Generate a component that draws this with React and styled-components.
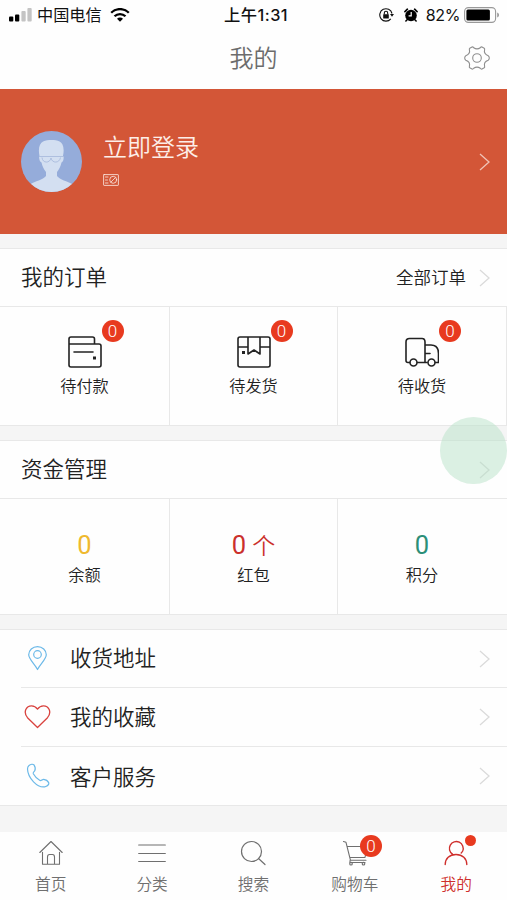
import React from 'react';
import styled, { css, createGlobalStyle } from 'styled-components';

const colorHero = '#d35637';
const colorBadge = '#e83a1f';
const colorActive = '#cf2f2c';
const colorLine = '#e8e8e8';

const GlobalStyle = createGlobalStyle`
  * { box-sizing: border-box; }
  body {
    margin: 0;
    background: #f5f5f5;
    font-family: "Liberation Sans", "Noto Sans CJK SC", sans-serif;
    font-weight: 350;
    color: #222;
  }
  svg { display: block; flex: none; }
`;

const cssRow = css`
  display: flex;
  align-items: center;
`;
const cssPanel = css`
  background: #fefefe;
  border-top: 1px solid ${colorLine};
  border-bottom: 1px solid ${colorLine};
`;
const cssDigits = css`
  font-family: Roboto, "Noto Sans CJK SC", sans-serif;
`;

const Page = styled.div`
  position: relative;
  display: flex;
  flex-direction: column;
  width: 507px;
  height: 900px;
  overflow: hidden;
  white-space: nowrap;
`;

const StatusBar = styled.div`
  display: grid;
  grid-template-columns: 1fr auto 1fr;
  align-items: center;
  height: 30px;
  padding: 0 7px 0 9px;
  background: #fefefe;
  color: #111;
  font-family: Inter, "Noto Sans CJK SC", sans-serif;
  font-weight: 400;
  line-height: 30px;
`;
const StatusLeft = styled.div`
  ${cssRow}
`;
const Carrier = styled.span`
  margin: 0 8px 0 5px;
  font-size: 16.2px;
`;
const StatusTime = styled.div`
  padding-left: 3px;
  font-size: 16.3px;
  font-weight: 500;
  letter-spacing: 0.5px;
`;
const StatusRight = styled.div`
  ${cssRow}
  justify-content: flex-end;
`;
const Percent = styled.span`
  margin: 0 4px 0 8px;
  font-size: 16px;
  letter-spacing: -0.4px;
`;
const StatusGlyph = styled.span`
  margin-right: 10px;
`;

const TitleBar = styled.header`
  ${cssRow}
  justify-content: space-between;
  height: 59px;
  padding: 0 17px 2px;
  background: #fefefe;

  > svg {
    margin-bottom: 2px;
  }
`;
const TitleSide = styled.div`
  width: 26px;
`;
const Title = styled.h1`
  margin: 0;
  font-size: 24px;
  font-weight: 350;
  line-height: 36px;
  color: #6c6c6c;
`;

const Hero = styled.section`
  ${cssRow}
  height: 145px;
  padding: 0 17px 0 21px;
  background: ${colorHero};
  color: #fdeee9;
`;
const HeroText = styled.div`
  flex: 1;
  padding: 0 0 7px 21px;
`;
const LoginText = styled.div`
  margin-bottom: 8px;
  font-size: 24px;
  line-height: 36px;
`;

const Panel = styled.section`
  ${cssPanel}
  margin-top: ${p => p.gap}px;
`;
const PanelHead = styled.div`
  ${cssRow}
  height: 57px;
  padding: 1px 17px 0 21px;
`;
const PanelTitle = styled.h2`
  flex: 1;
  margin: 0;
  font-size: 21.5px;
  font-weight: 350;
  line-height: 32px;
`;
const More = styled.span`
  margin-right: 13px;
  font-size: 17.5px;
  line-height: 28px;
`;
const Cells = styled.div`
  display: grid;
  grid-template-columns: 170px 168px 169px;
  height: ${p => p.h}px;
  border-top: 1px solid ${colorLine};
`;
const Cell = styled.div`
  display: flex;
  flex-direction: column;
  align-items: center;
  padding-top: ${p => p.top}px;
  border-right: 1px solid ${colorLine};

  &:last-child {
    border-right-color: ${p => p.closed ? colorLine : 'transparent'};
  }
`;
const CellLabel = styled.div`
  margin-top: ${p => p.gap || 0}px;
  font-size: 16.2px;
  line-height: 24px;
`;
const Amount = styled.div`
  ${cssDigits}
  height: 33px;
  font-size: 25.5px;
  font-weight: 400;
  line-height: 31px;
  color: ${p => p.color};
`;
const Unit = styled.span`
  margin-left: 6px;
  font-size: 23px;
  font-weight: 350;
`;

const IconBox = styled.div`
  position: relative;
`;
const Badge = styled.span`
  ${cssDigits}
  position: absolute;
  top: ${p => p.top}px;
  left: ${p => p.left}px;
  width: 22px;
  height: 22px;
  border-radius: 50%;
  background: ${colorBadge};
  color: #fff;
  font-size: 17px;
  line-height: 22px;
  text-align: center;
`;
const Dot = styled.span`
  position: absolute;
  top: -5px;
  left: 22px;
  width: 11px;
  height: 11px;
  border-radius: 50%;
  background: ${colorBadge};
`;

const MenuRow = styled.div`
  ${cssRow}
  height: ${p => p.h}px;
  margin-left: 21px;
  padding-right: 17px;
  border-bottom: 1px solid ${colorLine};

  &:last-child {
    border-bottom: 0;
  }
`;
const MenuIcon = styled.div`
  width: 49px;
  padding-left: 3px;
  color: ${p => p.color};
`;
const MenuText = styled.div`
  flex: 1;
  padding-top: ${p => p.shift}px;
  font-size: 21.5px;
  line-height: 32px;
`;

const TabBar = styled.nav`
  display: grid;
  grid-template-columns: repeat(5, 1fr);
  height: 68px;
  margin-top: auto;
  background: #fefefe;
`;
const Tab = styled.div`
  display: flex;
  flex-direction: column;
  align-items: center;
  padding-top: 8px;
  font-size: 15.7px;
  line-height: 24px;
  color: ${p => p.active ? colorActive : '#6f6f6f'};
`;
const TabLabel = styled.span`
  margin-top: 7px;
`;

const AssistiveBall = styled.div`
  position: absolute;
  top: 417px;
  left: 440px;
  width: 67px;
  height: 67px;
  border-radius: 50%;
  background: rgba(183, 225, 200, 0.5);
`;


const Icon = ({ w, h, sw = 1.3, children }) => (
  <svg
    width={w} height={h} viewBox={`0 0 ${w} ${h}`}
    fill="none" stroke="currentColor" strokeWidth={sw}
    strokeLinecap="round" strokeLinejoin="round"
  >
    {children}
  </svg>
);

const Chevron = ({ color = '#dadada' }) => (
  <svg width="11" height="18" viewBox="0 0 11 18" fill="none" stroke={color} strokeWidth="1.3">
    <path d="M1 1l9 8-9 8" />
  </svg>
);

const IconSignal = () => (
  <svg width="23" height="14" viewBox="0 0 23 14">
    <rect x="0" y="8.5" width="4.3" height="5" rx="1" fill="#000" />
    <rect x="6" y="6.5" width="4.3" height="7" rx="1" fill="#000" />
    <rect x="12.4" y="3" width="4.3" height="10.5" rx="1" fill="#c4c4c4" />
    <rect x="18.4" y="0" width="4.3" height="13.5" rx="1" fill="#c4c4c4" />
  </svg>
);
const IconWifi = () => (
  <svg width="20" height="15" viewBox="0 0 20 15" fill="none" stroke="#000" strokeWidth="2.3">
    <path d="M1.2 4.7a12.5 12.5 0 0 1 17.6 0M4.500 8.300a7.800 7.800 0 0 1 11 0" />
    <path d="M10 13.700l-3-3a4.200 4.200 0 0 1 6 0z" fill="#000" stroke="none" />
  </svg>
);
const IconRotation = () => (
  <svg width="15" height="14" viewBox="0 0 15 14" fill="none" stroke="#111" strokeWidth="1.1">
    <path d="M13 5.500A6.200 6.200 0 1 0 11.800 10.800" />
    <path d="M11 6h4l-2 2.800z" fill="#111" stroke="none" />
    <rect x="4.200" y="6.200" width="5.600" height="4.200" rx=".5" fill="#111" stroke="none" />
    <path d="M5.300 6.500V5a1.700 1.700 0 0 1 3.400 0v1.500" />
  </svg>
);
const IconAlarm = () => (
  <svg width="14" height="14" viewBox="0 0 14 14">
    <circle cx="7" cy="7.500" r="5.800" fill="#000" />
    <path d="M.9 3.600L3.400 1.200M13.100 3.600L10.600 1.200M3.100 11.800L1.900 13M10.900 11.800l1.200 1.200" stroke="#000" strokeWidth="1.6" strokeLinecap="round" />
    <path d="M7.200 4v3.800H4.600" stroke="#fff" strokeWidth="1.2" fill="none" />
  </svg>
);
const IconBattery = () => (
  <svg width="36" height="16" viewBox="0 0 36 16">
    <rect x=".6" y=".6" width="31" height="14.800" rx="3.800" fill="none" stroke="#999" strokeWidth="1.1" />
    <rect x="2.400" y="2.400" width="23.500" height="11.200" rx="1.500" fill="#000" />
    <path d="M33.200 5.500c2.400.8 2.400 4.200 0 5z" fill="#999" />
  </svg>
);
const IconGear = () => (
  <svg width="26" height="24" viewBox="0 0 26 24" fill="none" stroke="#8e8e8e" strokeWidth="1.1" strokeLinejoin="round">
    <circle cx="13" cy="12" r="4.300" />
    <path d="M8 1Q9 .7 9.700 1.700Q13 4 16.300 1.700Q17 .7 18 1L20.200 2.200Q20.900 2.700 20.600 3.700Q19.500 8 24.200 9.700Q25.300 10.500 25.300 12Q25.300 13.500 24.200 14.300Q19.500 16 20.600 20.300Q20.900 21.300 20.200 21.800L18 23Q17 23.300 16.300 22.300Q13 20 9.700 22.300Q9 23.300 8 23L5.800 21.800Q5.100 21.300 5.400 20.300Q6.500 16 1.800 14.300Q.7 13.500 .7 12Q.7 10.500 1.800 9.700Q6.500 8 5.400 3.700Q5.100 2.700 5.800 2.200Z" />
  </svg>
);
const Avatar = () => (
  <svg width="61" height="61" viewBox="0 0 61 61">
    <defs>
      <clipPath id="avatarClip"><circle cx="30.500" cy="30.500" r="30.500" /></clipPath>
    </defs>
    <g clipPath="url(#avatarClip)">
      <rect width="61" height="61" fill="#95acda" />
      <path
        d="M18.500 25C15.500 10 24 9 30.500 9S45 10 42 25c1.200 0 .8 6-1.500 6.500-.8 4-2.500 7-4.500 9.500v4c3 4 10 5 16 8.500v9H9v-9c5-3.500 13-4.500 16-8.500v-4c-2-2.500-3.700-5.500-4.500-9.500-2.200-.5-3-6.500-2-6.500z"
        fill="#d3dff1"
      />
      <path d="M18 25.500h25M21 26.500c.5 6 8 6 9 .5 1 5.500 8.500 5.500 9.500-.5" fill="none" stroke="#a9bbdc" strokeWidth=".9" />
    </g>
  </svg>
);
const IconCard = () => (
  <Icon w={16} h={12} sw={0.8}>
    <rect x=".6" y=".6" width="14.800" height="10.800" rx=".5" />
    <path d="M2.500 3h2.500M2.500 6h2M2.500 9h2.500M8.200 7.800l4-4" />
    <circle cx="10.200" cy="5.800" r="3.500" />
  </Icon>
);

const IconWallet = () => (
  <Icon w={34} h={32} sw={1.6}>
    <path d="M1 8V3q0-2 2-2h21.500q2 0 2 2v5M1 8h30q2 0 2 2v19q0 2-2 2H3q-2 0-2-2zM6 16h19" />
    <rect x="25" y="20.500" width="3" height="3" fill="currentColor" stroke="none" />
  </Icon>
);
const IconParcel = () => (
  <Icon w={34} h={32} sw={1.6}>
    <path d="M1 11V3q0-2 2-2h28q2 0 2 2v26q0 2-2 2H3q-2 0-2-2V11h10M23 11h10M11 1v17l6-4 6 4V1" />
    <rect x="5" y="15" width="3" height="3" fill="currentColor" stroke="none" />
  </Icon>
);
const IconTruck = () => (
  <Icon w={34} h={32} sw={1.6}>
    <path d="M4.500 26.500H3q-2 0-2-2V6q0-3.500 3.500-3.500H17Q20 2.500 20 6v20.500h2M12.500 26.500H20M20 9h6q7.500 0 7.500 8.500v9H30.500M20 17.500h5" />
    <circle cx="8.500" cy="26.500" r="3.500" />
    <circle cx="26.500" cy="26.500" r="3.500" />
  </Icon>
);

const IconPin = () => (
  <Icon w={27} h={26} sw={1.2}>
    <path d="M13.500 23.500C10.500 18 4.700 13 4.700 8.800a8.800 8.200 0 0 1 17.600 0c0 4.200-5.800 9.200-8.800 14.700z" />
    <circle cx="13.500" cy="8.500" r="3.800" />
  </Icon>
);
const IconHeart = () => (
  <Icon w={27} h={26} sw={1.3}>
    <path d="M13.500 23.500L3.500 13.700C-1.300 8 2.500 1.800 7.500 1.800c2.800 0 4.700 1.400 6 3.300 1.300-1.900 3.200-3.300 6-3.300 5 0 8.800 6.200 4 11.900z" />
  </Icon>
);
const IconPhone = () => (
  <Icon w={27} h={26} sw={1.2}>
    <path d="M5 2.500C6.500 1.300 9 .8 10 1.900c1 1.600 1.500 4.300.8 5.800C9.900 9 8.700 9.500 9.300 10.800c1.500 2.700 4 5.400 6.700 6.700 1.500.4 2.200-1.200 3.700-1.100 1.800.2 4.200 1.700 5 3.200.5 1.400-1.400 3.300-3.700 4.200C13.500 25.200 3.800 15 3.500 6 3.500 4.500 4 3.300 5 2.500z" />
  </Icon>
);

const IconHome = () => (
  <Icon w={26} h={26} sw={1.1}>
    <path d="M1.800 12.500L13 1.500l11.200 11M4.500 12.200v12h17v-12M9.500 24v-7q0-2.500 2-2.500h3q2 0 2 2.500v7" />
  </Icon>
);
const IconList = () => (
  <Icon w={28} h={26} sw={1.2}>
    <path d="M.7 5h26.600M.7 13.500h26.600M.7 21.500h26.600" />
  </Icon>
);
const IconSearch = () => (
  <Icon w={26} h={26} sw={1.2}>
    <circle cx="11.500" cy="11.500" r="10" />
    <path d="M18.500 18.500l6.500 6" />
  </Icon>
);
const IconCart = () => (
  <Icon w={26} h={26} sw={1.1}>
    <path d="M1.500 1.500l2.500.8 4.500 18h15.500M5 6.500h20l-2 11H8M8 20.500v2h15" />
    <circle cx="9" cy="23.700" r="1.300" />
    <circle cx="21.500" cy="23.700" r="1.300" />
  </Icon>
);
const IconUser = () => (
  <Icon w={26} h={26} sw={1.4}>
    <path d="M2.200 24.500c0-6 4.300-10 10.800-10s10.800 4 10.800 10M9.500 14.200a6.900 6.900 0 1 1 10.200-3.200q-.5 1-1.500 2" />
  </Icon>
);

const orders = [
  { name: '待付款', icon: <IconWallet /> },
  { name: '待发货', icon: <IconParcel /> },
  { name: '待收货', icon: <IconTruck /> },
];
const funds = [
  { name: '余额', value: '0', color: '#efb92e' },
  { name: '红包', value: '0', unit: '个', color: '#cb302c' },
  { name: '积分', value: '0', color: '#2c8f78' },
];
const links = [
  { name: '收货地址', icon: <IconPin />, color: '#6cb9e8', h: 58, shift: 0 },
  { name: '我的收藏', icon: <IconHeart />, color: '#d9433f', h: 59, shift: 2 },
  { name: '客户服务', icon: <IconPhone />, color: '#6cb9e8', h: 58, shift: 3 },
];
const tabs = [
  { name: '首页', icon: <IconHome /> },
  { name: '分类', icon: <IconList /> },
  { name: '搜索', icon: <IconSearch /> },
  { name: '购物车', icon: <IconCart />, count: 0 },
  { name: '我的', icon: <IconUser />, active: true },
];

const Status = () => (
  <StatusBar>
    <StatusLeft>
      <IconSignal />
      <Carrier>中国电信</Carrier>
      <IconWifi />
    </StatusLeft>
    <StatusTime>上午1:31</StatusTime>
    <StatusRight>
      <StatusGlyph><IconRotation /></StatusGlyph>
      <IconAlarm />
      <Percent>82%</Percent>
      <IconBattery />
    </StatusRight>
  </StatusBar>
);

export default class App extends React.Component {
  render() {
    return (
      <Page>
        <GlobalStyle />
        <Status />
        <TitleBar>
          <TitleSide />
          <Title>我的</Title>
          <IconGear />
        </TitleBar>
        <Hero>
          <Avatar />
          <HeroText>
            <LoginText>立即登录</LoginText>
            <IconCard />
          </HeroText>
          <Chevron color="#f0c4b7" />
        </Hero>

        <Panel gap={14}>
          <PanelHead>
            <PanelTitle>我的订单</PanelTitle>
            <More>全部订单</More>
            <Chevron />
          </PanelHead>
          <Cells h={119}>
            {orders.map(item => (
              <Cell top={29} closed key={item.name}>
                <IconBox>
                  {item.icon}
                  <Badge top={-16} left={34}>0</Badge>
                </IconBox>
                <CellLabel gap={6}>{item.name}</CellLabel>
              </Cell>
            ))}
          </Cells>
        </Panel>

        <Panel gap={14}>
          <PanelHead>
            <PanelTitle>资金管理</PanelTitle>
            <Chevron />
          </PanelHead>
          <Cells h={116}>
            {funds.map(item => (
              <Cell top={31} key={item.name}>
                <Amount color={item.color}>
                  {item.value}
                  {item.unit && <Unit>{item.unit}</Unit>}
                </Amount>
                <CellLabel>{item.name}</CellLabel>
              </Cell>
            ))}
          </Cells>
        </Panel>

        <Panel gap={14}>
          {links.map(item => (
            <MenuRow h={item.h} key={item.name}>
              <MenuIcon color={item.color}>{item.icon}</MenuIcon>
              <MenuText shift={item.shift}>{item.name}</MenuText>
              <Chevron />
            </MenuRow>
          ))}
        </Panel>

        <TabBar>
          {tabs.map(item => (
            <Tab active={item.active} key={item.name}>
              <IconBox>
                {item.icon}
                {item.count !== undefined && <Badge top={-5} left={18}>{item.count}</Badge>}
                {item.active && <Dot />}
              </IconBox>
              <TabLabel>{item.name}</TabLabel>
            </Tab>
          ))}
        </TabBar>
        <AssistiveBall />
      </Page>
    );
  }
}
